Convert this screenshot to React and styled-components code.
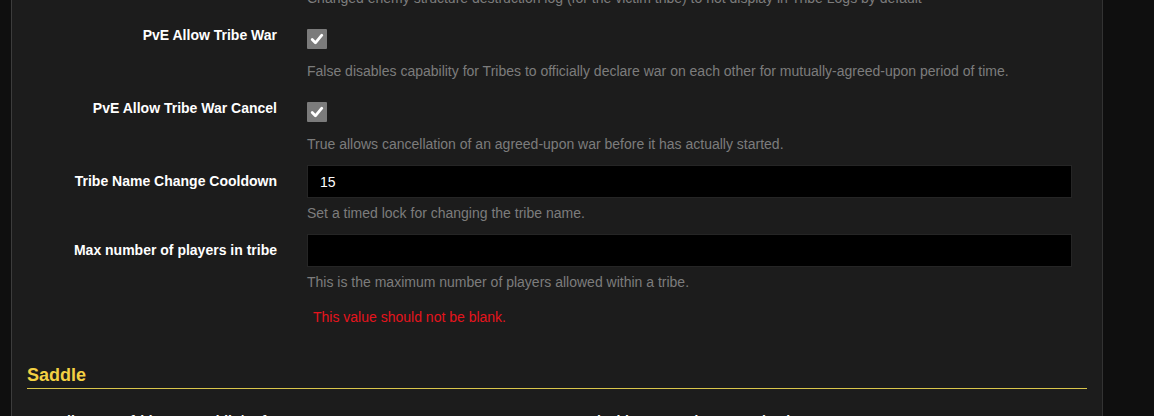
import React from "react";
import styled, { createGlobalStyle } from "styled-components";

const Global = createGlobalStyle`
  html, body { margin: 0; padding: 0; background: #0f0f0f; overflow: hidden; }
  body { font-family: "Liberation Sans", Arial, sans-serif; }
  * { box-sizing: border-box; }
`;

const Page = styled.div`
  height: 416px;
  overflow: hidden;
  padding-left: 11px;
`;

const Panel = styled.div`
  width: 1092px;
  min-height: 416px;
  background: #1c1c1c;
  border-left: 1px solid #3c3c3c;
  border-right: 1px solid #333;
  padding: 0 15px;
`;

const Form = styled.div`
  margin-top: -54px;
`;

const Row = styled.div`
  display: grid;
  grid-template-columns: 250px 1fr;
  column-gap: 30px;
  padding-right: 15px;
  margin-bottom: 11px;
`;

const Label = styled.label`
  font-weight: bold;
  font-size: 14px;
  line-height: 33px;
  color: #fff;
  text-align: right;
  white-space: nowrap;
`;

const Control = styled.div`
  display: flex;
  flex-direction: column;
`;

const CheckWrap = styled.div`
  height: 33px;
  padding-top: 10px;
`;

const Check = styled.span`
  display: flex;
  align-items: center;
  justify-content: center;
  width: 20px;
  height: 20px;
  background: #7b7b7b;
  border-radius: 1px;
`;

const Input = styled.input`
  width: 100%;
  height: 33px;
  background: #000;
  border: 1px solid #252525;
  color: #fff;
  font-family: "Liberation Sans", Arial, sans-serif;
  font-size: 14px;
  padding: 0 12px;
  outline: none;
`;

const Help = styled.div`
  margin-top: ${(p) => (p.$tight ? 5 : 9)}px;
  font-size: 14px;
  line-height: 20px;
  color: #7c7c7c;
  white-space: nowrap;
`;

const Errors = styled.ul`
  list-style: none;
  margin: 15px 0 0;
  padding: 0 0 0 6px;
  font-size: 14px;
  line-height: 20px;
  color: #e5141c;
`;

const SectionTitle = styled.h3`
  margin: 38px 0 0;
  font-size: 18px;
  font-weight: bold;
  line-height: 21px;
  color: #f3d043;
  padding-bottom: 2px;
  border-bottom: 1px solid #d9c54b;
`;

const Columns = styled.div`
  display: grid;
  grid-template-columns: 1fr 1fr;
  margin-top: 16px;
`;

const ColLabel = styled.label`
  padding-left: 30px;
  font-weight: bold;
  font-size: 14px;
  line-height: 33px;
  color: #fff;
  white-space: nowrap;
`;

const CheckMark = () => (
  <svg width="14" height="14" viewBox="0 0 14 14">
    <path d="M2.2 7.6 L5.4 10.8 L11.8 3.2" fill="none" stroke="#fff" strokeWidth="2.8" strokeLinecap="round" strokeLinejoin="round" />
  </svg>
);

const CheckRow = ({ label, help }) => (
  <Row>
    <Label>{label}</Label>
    <Control>
      <CheckWrap>
        <Check><CheckMark /></Check>
      </CheckWrap>
      <Help>{help}</Help>
    </Control>
  </Row>
);

const InputRow = ({ label, value, help, error }) => (
  <Row>
    <Label>{label}</Label>
    <Control>
      <Input defaultValue={value} />
      <Help $tight>{help}</Help>
      {error && (
        <Errors>
          <li>{error}</li>
        </Errors>
      )}
    </Control>
  </Row>
);

export default function App() {
  return (
    <>
      <Global />
      <Page>
        <Panel>
          <Form>
            <CheckRow
              label="PvE Hide Enemy Structure Destruction Log"
              help="Changed enemy structure destruction log (for the victim tribe) to not display in Tribe Logs by default"
            />
            <CheckRow
              label="PvE Allow Tribe War"
              help="False disables capability for Tribes to officially declare war on each other for mutually-agreed-upon period of time."
            />
            <CheckRow
              label="PvE Allow Tribe War Cancel"
              help="True allows cancellation of an agreed-upon war before it has actually started."
            />
            <InputRow
              label="Tribe Name Change Cooldown"
              value="15"
              help="Set a timed lock for changing the tribe name."
            />
            <InputRow
              label="Max number of players in tribe"
              value=""
              help="This is the maximum number of players allowed within a tribe."
              error="This value should not be blank."
            />
          </Form>
          <SectionTitle>Saddle</SectionTitle>
          <Columns>
            <ColLabel>Allow Cryofridge on Saddle/Raft</ColLabel>
            <ColLabel>Disable Cryopod Enemy Check</ColLabel>
          </Columns>
        </Panel>
      </Page>
    </>
  );
}
